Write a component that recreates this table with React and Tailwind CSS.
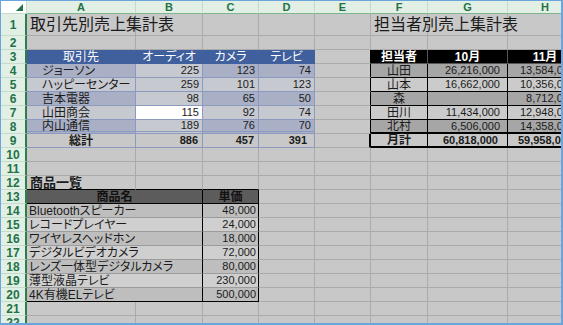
import React from 'react';

// Excel sheet, whole sheet selected (gray tint), B7 active
const clients = [
  ['ジョーソン', '225', '123', '74'],
  ['ハッピーセンター', '259', '101', '123'],
  ['吉本電器', '98', '65', '50'],
  ['山田商会', '115', '92', '74'],
  ['内山通信', '189', '76', '70'],
];

const staff = [
  ['山田', '26,216,000', '13,584,000'],
  ['山本', '16,662,000', '10,356,000'],
  ['森', '', '8,712,000'],
  ['田川', '11,434,000', '12,948,000'],
  ['北村', '6,506,000', '14,358,000'],
];

const products = [
  ['Bluetoothスピーカー', '48,000'],
  ['レコードプレイヤー', '24,000'],
  ['ワイヤレスヘッドホン', '18,000'],
  ['デジタルビデオカメラ', '72,000'],
  ['レンズ一体型デジタルカメラ', '80,000'],
  ['薄型液晶テレビ', '230,000'],
  ['4K有機ELテレビ', '500,000'],
];

const COLS = ['A', 'B', 'C', 'D', 'E', 'F', 'G', 'H'];

const SHEET = 'bg-[#c8c8c8] border-r border-b border-[#ababab]';
const JP = 'text-[12px] [font-feature-settings:"palt"]';

const getCell = (r, c) => {
  // titles
  if (r === 1 && c === 1)
    return { cls: `${SHEET} items-end pb-[2px] pl-[3px]`, text: '取引先別売上集計表', tcls: 'relative z-10 text-[16px]' };
  if (r === 1 && c === 6)
    return { cls: `${SHEET} items-end pb-[2px] pl-[3px]`, text: '担当者別売上集計表', tcls: 'relative z-10 text-[16px]' };

  // left table
  if (r === 3 && c <= 4) {
    const labels = ['取引先', 'オーディオ', 'カメラ', 'テレビ'];
    return { cls: 'bg-[#40609d] border-r border-b border-[#40609d] text-white justify-center', text: labels[c - 1], tcls: JP };
  }
  if (r >= 4 && r <= 8 && c <= 4) {
    const row = clients[r - 4];
    const dark = r % 2 === 0;
    const last = r === 8 ? 'border-b-[3px] border-double' : '';
    let bg = dark ? 'bg-[#a9b0c6]' : 'bg-[#c7c9d0]';
    if (c === 2) bg = r === 7 ? 'bg-white' : 'bg-[#c7c9d0]';
    if (c === 1)
      return { cls: `${bg} border-r border-b border-[#8c9ac0] ${last} pl-[15px]`, text: row[0], tcls: JP };
    return { cls: `${bg} border-r border-b border-[#8c9ac0] ${last} justify-end pr-[3px]`, text: row[c - 1] };
  }
  if (r === 9 && c <= 4) {
    const totals = ['総計', '886', '457', '391'];
    if (c === 1)
      return { cls: 'bg-[#c8c8c8] border-r border-b border-[#8c9ac0] justify-center font-bold', text: totals[0], tcls: JP };
    const pad = c === 4 ? 'pr-[7px]' : 'pr-[4px]';
    return { cls: `bg-[#c8c8c8] border-r border-b border-[#8c9ac0] justify-end font-bold ${pad}`, text: totals[c - 1] };
  }

  // right table
  if (r >= 3 && r <= 9 && c === 5) {
    const edge = r === 9 ? 'border-r-2' : 'border-r';
    return { cls: `bg-[#c8c8c8] border-b border-b-[#ababab] ${edge} border-r-black` };
  }
  if (r === 3 && c >= 6) {
    const labels = ['担当者', '10月', '11月'];
    return { cls: 'bg-black border-r border-b border-[#555555] text-white font-bold justify-center', text: labels[c - 6], tcls: JP };
  }
  if (r >= 4 && r <= 8 && c >= 6) {
    const row = staff[r - 4];
    const dark = r % 2 === 0;
    const bg = dark ? 'bg-[#a6a6a6]' : 'bg-[#cbcbcb]';
    const bottom = r === 8 ? 'border-b-2' : 'border-b';
    if (c === 6)
      return { cls: `${bg} border-r ${bottom} border-black justify-center`, text: row[0], tcls: JP };
    return { cls: `${bg} border-r ${bottom} border-black justify-end pr-[7px]`, text: row[c - 6] };
  }
  if (r === 9 && c >= 6) {
    const totals = ['月計', '60,818,000', '59,958,000'];
    if (c === 6)
      return { cls: 'bg-[#c8c8c8] border-r border-b-2 border-black justify-center font-bold', text: totals[0], tcls: JP };
    return { cls: 'bg-[#c8c8c8] border-r border-b-2 border-black justify-end font-bold pr-[9px]', text: totals[c - 6] };
  }

  // product list
  if (r === 12 && c === 1)
    return { cls: 'bg-[#c8c8c8] border-r border-b border-r-[#ababab] border-b-black items-end pl-[3px]', text: '商品一覧', tcls: 'relative z-10 text-[13px] font-bold' };
  if (r === 12 && (c === 2 || c === 3))
    return { cls: 'bg-[#c8c8c8] border-r border-b border-r-[#ababab] border-b-black' };
  if (r === 13 && c === 1)
    return { span: true, cls: 'bg-[#5c5c5c] border-r border-b border-black justify-center font-bold text-[#111111]', text: '商品名', tcls: JP };
  if (r === 13 && c === 3)
    return { cls: 'bg-[#5c5c5c] border-r border-b border-black justify-center font-bold text-[#111111]', text: '単価', tcls: JP };
  if (r >= 14 && r <= 20 && (c === 1 || c === 3)) {
    const row = products[r - 14];
    const bg = r % 2 === 0 ? 'bg-[#bebebe]' : 'bg-[#cfcfcf]';
    const bottom = r === 20 ? 'border-b-black' : 'border-b-[#9c9c9c]';
    if (c === 1)
      return { span: true, cls: `${bg} border-r border-b border-r-black ${bottom} pl-[2px]`, text: row[0], tcls: JP };
    return { cls: `${bg} border-r border-b border-r-black ${bottom} justify-end pr-[2px]`, text: row[1] };
  }
  if (r >= 13 && r <= 20 && c === 2) return null;

  return { cls: SHEET };
};

const Corner = () => (
  <div className="bg-white border-r border-b border-[#c6dccd] flex items-end justify-end pr-[3px] pb-[2px]">
    <svg width="7" height="7" viewBox="0 0 7 7">
      <polygon points="7,0 7,7 0,7" fill="#217346" />
    </svg>
  </div>
);

const App = () => {
  const cells = [<Corner key="corner" />];

  COLS.forEach((col) => {
    cells.push(
      <div
        key={`h-${col}`}
        className="bg-[#e1efe5] border-r border-r-[#c3dccb] border-b border-b-[#7db58e] flex items-center justify-center text-[11px] font-bold text-[#217346]"
      >
        {col}
      </div>
    );
  });

  for (let r = 1; r <= 22; r++) {
    cells.push(
      <div
        key={`r-${r}`}
        className={`bg-[#e1efe5] border-r-2 border-r-[#2e7d4f] border-b border-b-[#c3dccb] flex justify-center text-[12px] font-bold text-[#217346] ${r === 1 ? 'items-end pb-[1px]' : 'items-center'}`}
      >
        {r}
      </div>
    );
    for (let c = 1; c <= 8; c++) {
      const cell = getCell(r, c);
      if (!cell) continue;
      cells.push(
        <div
          key={`${r}-${c}`}
          className={`flex whitespace-nowrap leading-none ${cell.span ? 'col-span-2' : ''} ${cell.cls.includes('items-end') ? '' : 'items-center'} ${cell.cls}`}
        >
          {cell.text && <span className={cell.tcls || ''}>{cell.text}</span>}
        </div>
      );
    }
  }

  return (
    <div className="w-[563px] h-[325px] overflow-hidden bg-white border-t border-l border-r-2 border-b-2 border-[#6aa5dd] font-['Liberation_Sans','Noto_Sans_CJK_JP',sans-serif] text-[11px] text-[#1b1b1b]">
      <div className="grid grid-cols-[26px_109px_67px_56px_56px_56px_57px_80px_75px] grid-rows-[13px_22px_repeat(21,14px)]">
        {cells}
      </div>
    </div>
  );
};

export default App;
